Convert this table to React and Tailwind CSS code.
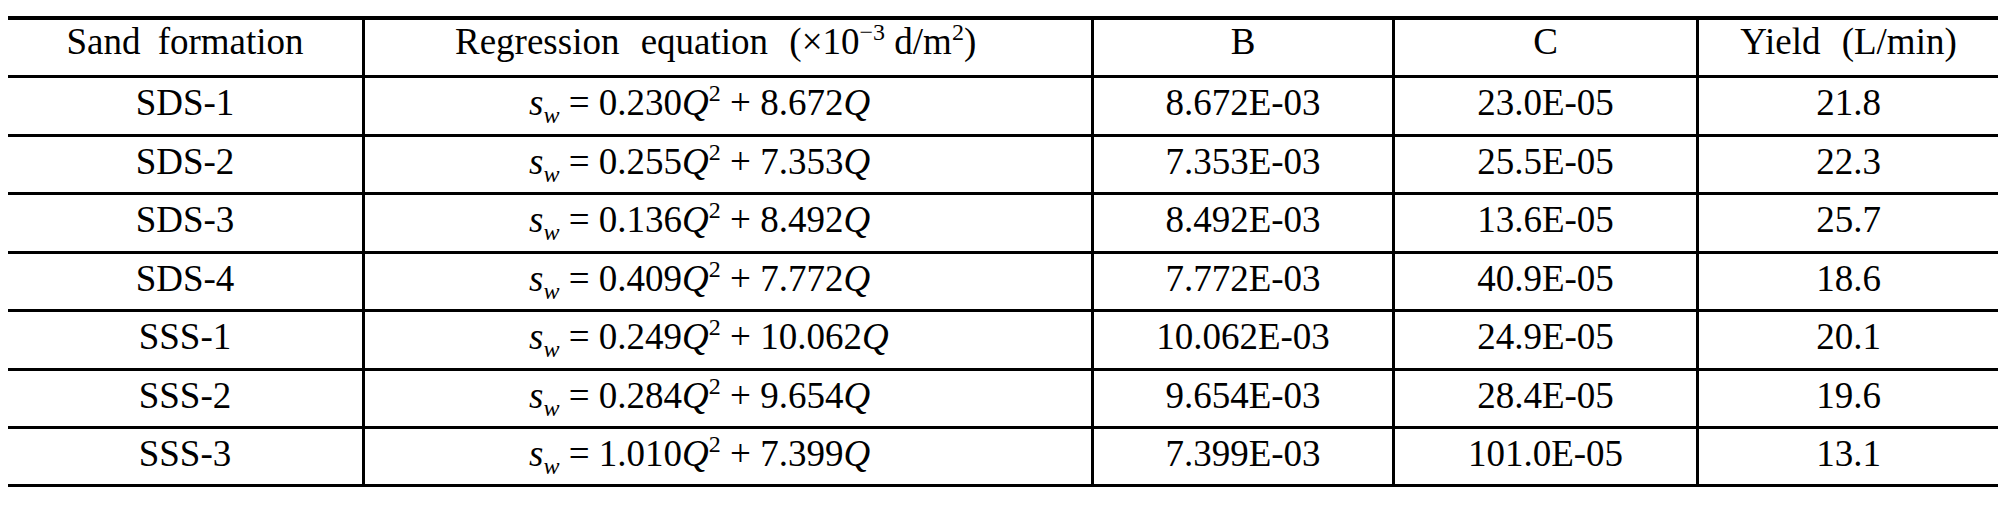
import React from "react";

const rows = [
  ["SDS-1", "0.230", "8.672", "8.672E-03", "23.0E-05", "21.8", "h-[56px]"],
  ["SDS-2", "0.255", "7.353", "7.353E-03", "25.5E-05", "22.3", "h-[55px]"],
  ["SDS-3", "0.136", "8.492", "8.492E-03", "13.6E-05", "25.7", "h-[56px]"],
  ["SDS-4", "0.409", "7.772", "7.772E-03", "40.9E-05", "18.6", "h-[55px]"],
  ["SSS-1", "0.249", "10.062", "10.062E-03", "24.9E-05", "20.1", "h-[56px]"],
  ["SSS-2", "0.284", "9.654", "9.654E-03", "28.4E-05", "19.6", "h-[55px]"],
  ["SSS-3", "1.010", "7.399", "7.399E-03", "101.0E-05", "13.1", "h-[55px]"],
];

const cell = "flex justify-center items-start";
const sep = "border-l-[3px] border-black";

export default function App() {
  return (
    <div className="w-[2008px] h-[512px] bg-white text-black pt-[16px] pl-[8px] font-['Liberation_Serif','Times_New_Roman',serif]">
      <div className="w-[1990px] border-t-[4px] border-black text-[37px] leading-[37px]">
        <div className="grid grid-cols-[354px_729px_301px_304px_302px] h-[58px] border-b-[3px] border-black">
          <div className={`${cell} pt-[3px] [word-spacing:8px]`}>Sand formation</div>
          <div className={`flex items-start ${sep} pt-[3px] pl-[90px] [word-spacing:12px]`}>
            <span className="whitespace-nowrap">
              Regression equation (×10
              <span className="relative -top-[14px] text-[24px]">−3</span>
              <span className="[word-spacing:0px]"> d/m</span>
              <span className="relative -top-[14px] text-[24px]">2</span>)
            </span>
          </div>
          <div className={`${cell} ${sep} pt-[3px]`}>B</div>
          <div className={`${cell} ${sep} pt-[3px]`}>C</div>
          <div className={`${cell} ${sep} pt-[3px] [word-spacing:12px]`}>Yield (L/min)</div>
        </div>
        {rows.map((r) => (
          <div
            key={r[0]}
            className="grid grid-cols-[354px_729px_301px_304px_302px] border-b-[3px] border-black"
          >
            <div className={`${cell} ${r[6]} pt-[6px]`}>{r[0]}</div>
            <div className={`flex items-start ${sep} pt-[6px] pl-[164px]`}>
              <span className="whitespace-pre">
                <i>s</i>
                <i className="relative top-[8px] text-[24px]">w</i>
                {" = "}
                {r[1]}
                <i>Q</i>
                <span className="relative -top-[14px] text-[24px]">2</span>
                {" + "}
                {r[2]}
                <i>Q</i>
              </span>
            </div>
            <div className={`${cell} ${sep} pt-[6px]`}>{r[3]}</div>
            <div className={`${cell} ${sep} pt-[6px]`}>{r[4]}</div>
            <div className={`${cell} ${sep} pt-[6px]`}>{r[5]}</div>
          </div>
        ))}
      </div>
    </div>
  );
}
